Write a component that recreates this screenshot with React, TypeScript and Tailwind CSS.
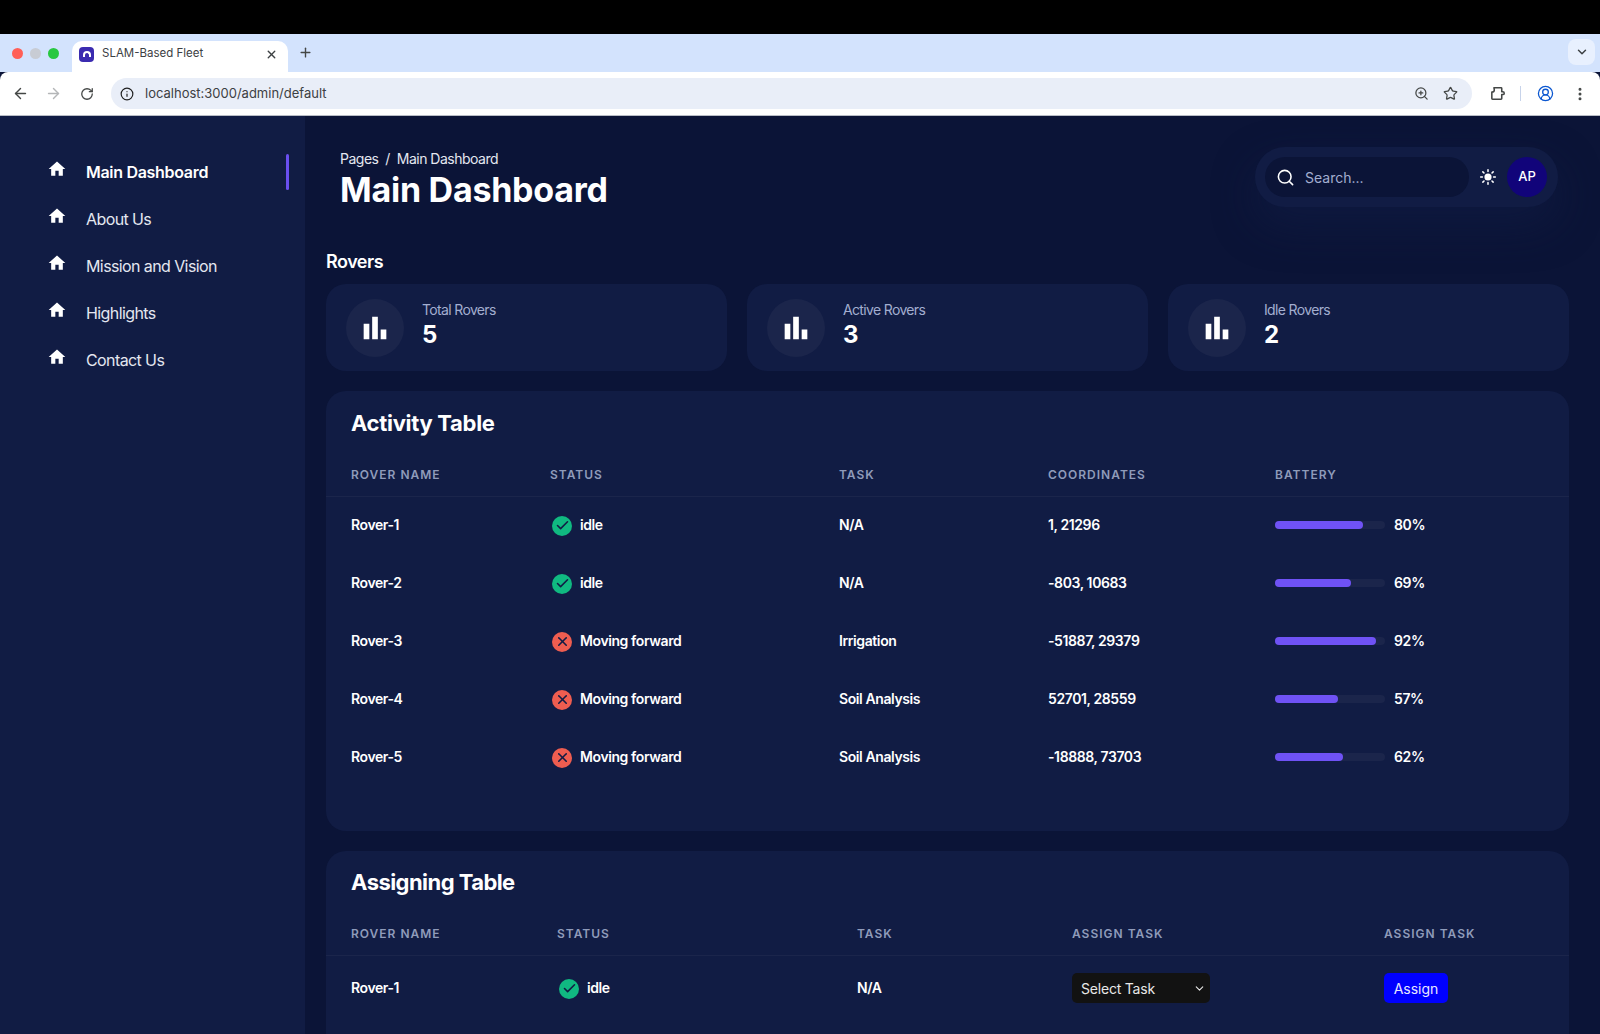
import { ArrowLeft, ArrowRight, Check, ChevronDown, CircleUserRound, EllipsisVertical, Info, Plus, RotateCw, Search, Star, X, ZoomIn } from "lucide-react";
import { MdBarChart, MdHome } from "react-icons/md";
import { IoSunny } from "react-icons/io5";

const navItems = ["Main Dashboard", "About Us", "Mission and Vision", "Highlights", "Contact Us"];

const stats = [
  { label: "Total Rovers", value: "5" },
  { label: "Active Rovers", value: "3" },
  { label: "Idle Rovers", value: "2" },
];

const rovers = [
  { name: "Rover-1", status: "idle", task: "N/A", coords: "1, 21296", battery: 80 },
  { name: "Rover-2", status: "idle", task: "N/A", coords: "-803, 10683", battery: 69 },
  { name: "Rover-3", status: "Moving forward", task: "Irrigation", coords: "-51887, 29379", battery: 92 },
  { name: "Rover-4", status: "Moving forward", task: "Soil Analysis", coords: "52701, 28559", battery: 57 },
  { name: "Rover-5", status: "Moving forward", task: "Soil Analysis", coords: "-18888, 73703", battery: 62 },
];

function StatusCell({ status }: { status: string }) {
  const idle = status === "idle";
  return (
    <div className="ml-[2px] flex items-center gap-2">
      <span className={`mt-[3px] flex h-5 w-5 items-center justify-center rounded-full ${idle ? "bg-[#10b981]" : "bg-[#ee5d50]"}`}>
        {idle ? <Check size={15} strokeWidth={2.5} className="text-[#111c44]" /> : <X size={15} strokeWidth={2.5} className="text-[#111c44]" />}
      </span>
      <span>{status}</span>
    </div>
  );
}

function HeadCell({ children }: { children: string }) {
  return <div className="pt-[6px] text-[12px] font-semibold tracking-[1px] text-[#8f9bba]">{children}</div>;
}

function BrowserChrome() {
  return (
    <div className="shrink-0 font-['Inter',sans-serif]">
      <div className="h-[34px] bg-black" />
      <div className="flex h-[38px] items-end bg-[#d3e3fd]">
        <div className="flex h-[38px] w-[72px] items-center gap-[7px] pl-3">
          <span className="h-[11px] w-[11px] rounded-full bg-[#ff5f57]" />
          <span className="h-[11px] w-[11px] rounded-full bg-[#c8ccd4]" />
          <span className="h-[11px] w-[11px] rounded-full bg-[#28c840]" />
        </div>
        <div className="flex h-[31px] w-[216px] items-center rounded-t-[10px] bg-white pb-[5px] pl-[7px] pr-[10px]">
          <span className="flex h-[15px] w-[15px] items-center justify-center rounded-[4px] bg-[#3b2bb0]">
            <span className="h-[6px] w-[8px] rounded-t-full border-2 border-b-0 border-white" />
          </span>
          <span className="ml-2 flex-1 text-[11.5px] text-[#3c4043]">SLAM-Based Fleet</span>
          <X size={13} strokeWidth={2.5} className="text-[#3c4043]" />
        </div>
        <div className="flex h-[38px] flex-1 items-center justify-between pb-[2px] pl-[10px] pr-[5px]">
          <Plus size={15} strokeWidth={2.2} className="text-[#444746]" />
          <span className="flex h-[26px] w-[27px] items-center justify-center rounded-lg bg-[#e8f0fe]">
            <ChevronDown size={14} strokeWidth={2.5} className="text-[#3c4043]" />
          </span>
        </div>
      </div>
      <div className="flex h-[44px] items-center rounded-t-lg border-b border-[#b9bdc6] bg-white">
        <div className="flex w-[111px] items-center gap-[16px] pl-[12px]">
          <ArrowLeft size={17} strokeWidth={2} className="text-[#444746]" />
          <ArrowRight size={17} strokeWidth={2} className="text-[#b4b6b8]" />
          <RotateCw size={14} strokeWidth={2.2} className="ml-[2px] text-[#444746]" />
        </div>
        <div className="flex h-[31px] w-[1361px] items-center rounded-full bg-[#e9eef8] pl-[9px] pr-[14px]">
          <Info size={14} strokeWidth={2} className="text-[#1f1f1f]" />
          <span className="ml-[11px] flex-1 text-[13px] text-[#3c4043]">localhost:3000/admin/default</span>
          <ZoomIn size={15} strokeWidth={2} className="text-[#444746]" />
          <Star size={15} strokeWidth={2} className="ml-[14px] text-[#444746]" />
        </div>
        <div className="flex flex-1 items-center pl-[17px]">
          <svg width="17" height="17" viewBox="0 0 24 24" fill="none" stroke="#444746" strokeWidth="2.2" strokeLinejoin="round">
            <path d="M7 4h10a1 1 0 0 1 1 1v4.5h1.5a2 2 0 0 1 0 4H18V19a1 1 0 0 1-1 1H5a1 1 0 0 1-1-1v-9c2 0 3.5-.8 3.5-3z" />
          </svg>
          <span className="ml-[14px] h-[15px] w-px bg-[#c7d3ea]" />
          <CircleUserRound size={17} strokeWidth={1.8} className="ml-[16px] text-[#0b57d0]" />
          <EllipsisVertical size={16} strokeWidth={2.5} className="ml-[18px] text-[#444746]" />
        </div>
      </div>
    </div>
  );
}

export default function App() {
  return (
    <div className="flex h-[1034px] flex-col overflow-hidden bg-[#0b1437] font-['Inter',sans-serif] text-white">
      <BrowserChrome />

      <div className="flex min-h-0 flex-1">
        {/* SIDEBAR */}
        <aside className="w-[305px] shrink-0 bg-[#111c44] pt-[38px]">
          <nav className="flex flex-col gap-[11px]">
            {navItems.map((item, i) => (
              <div key={item} className="flex h-9 items-center pl-[47px] pr-4">
                <MdHome size={20} className="-mt-[6px] text-white" />
                <span className={`ml-[19px] flex-1 text-[16px] ${i === 0 ? "font-semibold tracking-[-0.3px] text-white" : "tracking-[-0.6px] text-[#e4e7f0]"}`}>{item}</span>
                {i === 0 && <span className="h-9 w-[3px] rounded-full bg-[#6a4ff0]" />}
              </div>
            ))}
          </nav>
        </aside>

        {/* MAIN */}
        <main className="min-w-0 flex-1 pl-[21px] pr-[31px] pt-[31px]">
          <div className="flex items-start justify-between pl-[14px] pr-[11px]">
            <div className="pt-[2px]">
              <div className="text-[14px] leading-5 tracking-[-0.5px] text-[#e4e7f0]">Pages &nbsp;/&nbsp; Main Dashboard</div>
              <h1 className="text-[34px] font-bold leading-[42px] tracking-[-0.25px]">Main Dashboard</h1>
            </div>
            <div className="flex h-[60px] w-[303px] items-center rounded-full bg-[#111c44] pl-[10px] shadow-[0_18px_40px_rgba(17,28,68,0.6)]">
              <div className="flex h-10 w-[204px] items-center rounded-full bg-[#0b1437] pl-[11px]">
                <Search size={19} strokeWidth={2} className="text-white" />
                <span className="ml-[10px] text-[14px] text-[#a3aed0]">Search...</span>
              </div>
              <IoSunny size={18} className="ml-[10px] text-white" />
              <span className="ml-[10px] flex h-10 w-10 items-center justify-center rounded-full bg-[#11047a] text-[13px] font-medium">AP</span>
            </div>
          </div>

          <h2 className="mt-[39px] text-[18px] font-semibold leading-6 tracking-[-0.5px]">Rovers</h2>

          <div className="mt-[10px] grid grid-cols-3 gap-5">
            {stats.map((s) => (
              <div key={s.label} className="flex h-[87px] items-center rounded-[20px] bg-[#111c44] pl-5">
                <span className="flex h-[58px] w-[58px] items-center justify-center rounded-full bg-[#1b254b]">
                  <MdBarChart size={34} className="text-white" />
                </span>
                <div className="mb-[6px] ml-[18px]">
                  <div className="text-[14px] leading-5 tracking-[-0.65px] text-[#a3aed0]">{s.label}</div>
                  <div className="text-[24px] font-bold leading-[30px]">{s.value}</div>
                </div>
              </div>
            ))}
          </div>

          {/* ACTIVITY TABLE */}
          <section className="mt-5 h-[440px] rounded-[20px] bg-[#111c44] pt-[18px]">
            <h3 className="pl-[25px] text-[22px] font-bold leading-7 tracking-[-0.3px]">Activity Table</h3>
            <div className="mt-[23px] grid h-[37px] grid-cols-[199px_289px_209px_227px_1fr] border-b border-[#1b254b] pl-[25px]">
              <HeadCell>ROVER NAME</HeadCell>
              <HeadCell>STATUS</HeadCell>
              <HeadCell>TASK</HeadCell>
              <HeadCell>COORDINATES</HeadCell>
              <HeadCell>BATTERY</HeadCell>
            </div>
            <div className="-mt-[2px]">
              {rovers.map((r) => (
                <div key={r.name} className="grid h-[58px] grid-cols-[199px_289px_209px_227px_1fr] items-center pl-[25px] text-[14px] font-semibold tracking-[-0.4px]">
                  <div>{r.name}</div>
                  <StatusCell status={r.status} />
                  <div>{r.task}</div>
                  <div>{r.coords}</div>
                  <div className="flex items-center">
                    <div className="mt-[2px] h-2 w-[110px] rounded-full bg-[#1b254b]">
                      <div className="h-2 rounded-full bg-[#6f52f5]" style={{ width: `${r.battery}%` }} />
                    </div>
                    <span className="ml-[9px]">{r.battery}%</span>
                  </div>
                </div>
              ))}
            </div>
          </section>

          {/* ASSIGNING TABLE */}
          <section className="mt-5 rounded-[20px] bg-[#111c44] pb-10 pt-[17px]">
            <h3 className="pl-[25px] text-[22px] font-bold leading-7 tracking-[-0.55px]">Assigning Table</h3>
            <div className="mt-[23px] grid h-[37px] grid-cols-[206px_300px_215px_312px_1fr] border-b border-[#1b254b] pl-[25px]">
              <HeadCell>ROVER NAME</HeadCell>
              <HeadCell>STATUS</HeadCell>
              <HeadCell>TASK</HeadCell>
              <HeadCell>ASSIGN TASK</HeadCell>
              <HeadCell>ASSIGN TASK</HeadCell>
            </div>
            <div className="grid h-[62px] grid-cols-[206px_300px_215px_312px_1fr] items-center pl-[25px] text-[14px] font-semibold tracking-[-0.4px]">
              <div>Rover-1</div>
              <StatusCell status="idle" />
              <div>N/A</div>
              <div className="mt-[2px] flex h-[30px] w-[138px] items-center justify-between rounded-[5px] bg-[#121212] pl-[9px] pr-[4px] text-[14px] font-normal tracking-[-0.2px] text-[#e8e8e8]">
                <span>Select Task</span>
                <ChevronDown size={13} strokeWidth={2} />
              </div>
              <button className="mt-[2px] h-[30px] w-[64px] rounded-[5px] bg-[#0000ff] text-[14px] font-normal tracking-normal text-[#e8e8ff]">Assign</button>
            </div>
          </section>
        </main>
      </div>
    </div>
  );
}
